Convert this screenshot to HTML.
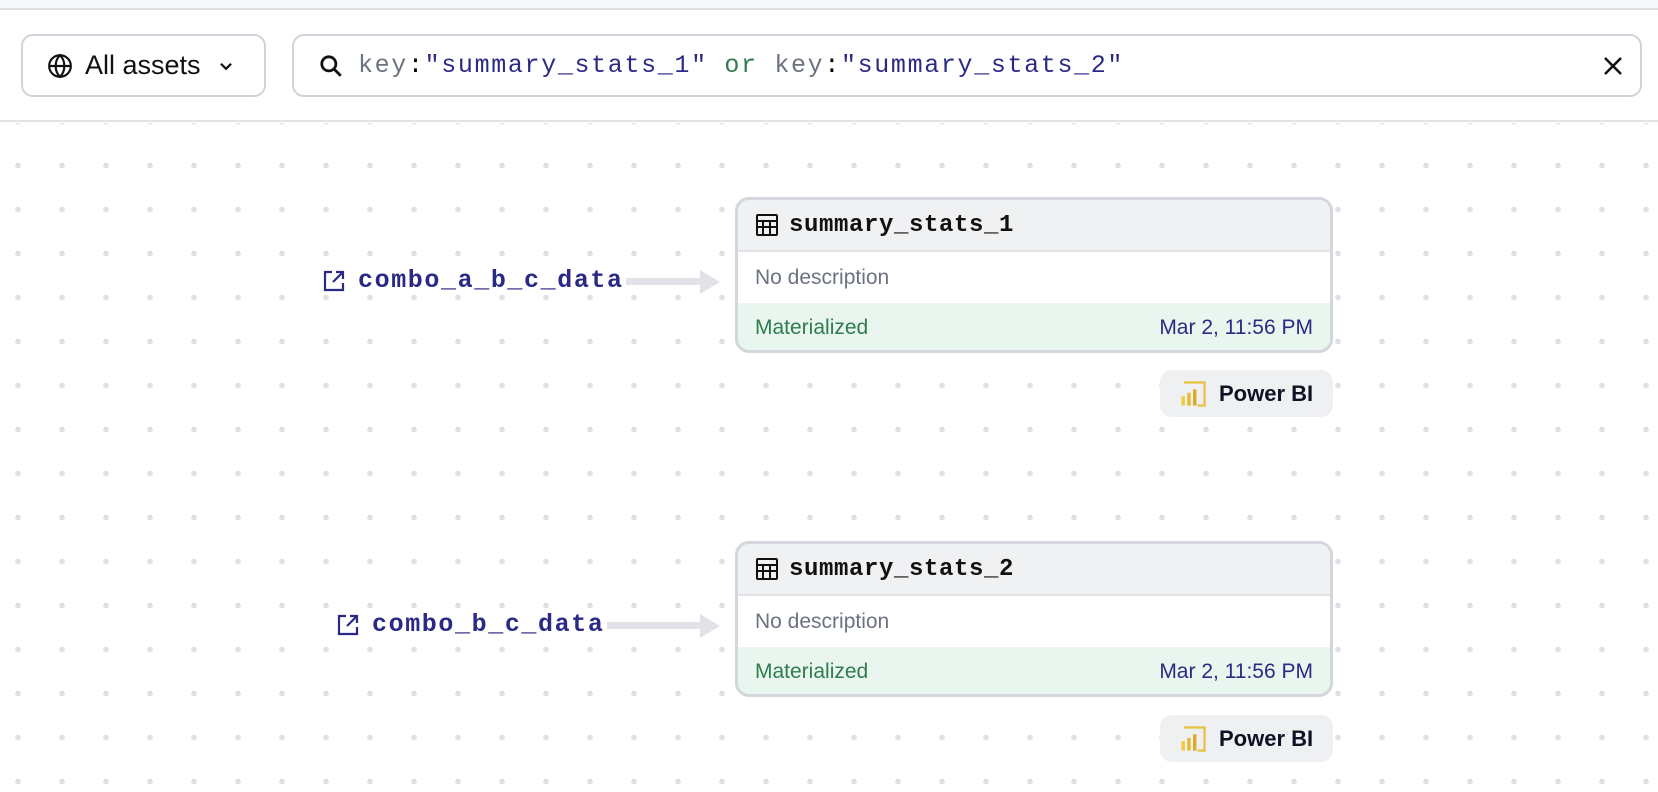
<!DOCTYPE html>
<html><head><meta charset="utf-8"><style>
*{box-sizing:border-box;margin:0;padding:0}
body{width:1658px;height:792px;overflow:hidden;background:#fff;font-family:"Liberation Sans",sans-serif;position:relative}
.top{position:absolute;left:0;top:0;width:1658px;height:122px;background:#fff;border-bottom:2px solid #e1e3e8}
.top:before{content:"";position:absolute;left:0;top:0;width:100%;height:8px;background:#f7f8f9;border-bottom:2px solid #dcdfe4}
.canvas{position:absolute;left:0;top:123px;width:1658px;height:669px;background-image:radial-gradient(circle,#dfe0e6 2.6px,transparent 3px);background-size:44px 44px;background-position:-4px -23.5px}
.btn{position:absolute;left:21px;top:34px;width:245px;height:63px;border:2px solid #d0d3da;border-radius:12px;display:flex;align-items:center;padding-left:24px;font-size:27px;color:#111}
.search{position:absolute;left:292px;top:34px;width:1350px;height:63px;border:2px solid #d0d3da;border-radius:12px;display:flex;align-items:center;padding-left:24px}
.mono{font-family:"Liberation Mono",monospace}
.q{font-size:25px;letter-spacing:1.65px;margin-left:14px}
.g{color:#6b7280}.b{color:#2a2a86}.gr{color:#2f7d4d}
.card{position:absolute;left:735px;width:598px;height:156px;border:3px solid #d3d6dc;border-radius:14px;overflow:hidden;background:#fff}
.ch{height:52px;background:#f0f1f3;border-bottom:2px solid #e1e3e7;display:flex;align-items:center;padding-left:17px}
.ch span{font-family:"Liberation Mono",monospace;font-size:24px;letter-spacing:0.6px;color:#111;margin-left:10px;font-weight:bold}
.cd{height:51px;display:flex;align-items:center;padding-left:17px;font-size:21px;color:#6b7280}
.cf{height:50px;background:#e8f6ef;display:flex;align-items:center;justify-content:space-between;padding:0 17px;font-size:21px}
.pill{position:absolute;left:1160px;width:173px;height:47px;background:#eff0f2;border-radius:12px;display:flex;align-items:center;padding-left:19px;font-size:22px;font-weight:bold;color:#0f1222}
.pill svg{margin-right:12px}
.src{position:absolute;display:flex;align-items:center;color:#2a2a86;font-family:"Liberation Mono",monospace;font-size:25px;letter-spacing:1.6px;font-weight:bold}
.src svg{margin-right:12px}
.arrow{position:absolute;height:7px;background:#e1e3e8}
.head{position:absolute;width:0;height:0;border-top:12px solid transparent;border-bottom:12px solid transparent;border-left:20px solid #e1e3e8}
</style></head><body>
<div class="top">
<div class="btn"><svg width="26" height="26" viewBox="0 0 24 24" fill="none" stroke="#111" stroke-width="2"><circle cx="12" cy="12" r="10"/><path d="M2 12h20M12 2c3 3 4 6.5 4 10s-1 7-4 10c-3-3-4-6.5-4-10s1-7 4-10z"/></svg><span style="margin-left:12px">All assets</span><svg style="margin-left:16px" width="18" height="18" viewBox="0 0 16 16" fill="none" stroke="#111" stroke-width="2"><path d="M3.5 6l4.5 4.5 4.5-4.5"/></svg></div>
<div class="search"><svg width="26" height="26" viewBox="0 0 24 24" fill="none" stroke="#111" stroke-width="2.6"><circle cx="10" cy="10" r="6.5"/><path d="M15 15l6 6"/></svg><span class="mono q"><span class="g">key</span>:<span class="b">"summary_stats_1"</span> <span class="gr">or</span> <span class="g">key</span>:<span class="b">"summary_stats_2"</span></span>
<svg style="position:absolute;right:16px;top:19px" width="22" height="22" viewBox="0 0 22 22" stroke="#111" stroke-width="2.5"><path d="M3 3l16 16M19 3L3 19"/></svg></div>
</div>
<div class="canvas"></div>

<div class="src" style="left:322px;top:266px"><svg width="24" height="24" viewBox="0 0 24 24" fill="none" stroke="#2a2a86" stroke-width="2.2"><path d="M10 3H3v18h18v-7"/><path d="M14 3h7v7M21 3l-10 10"/></svg>combo_a_b_c_data</div>
<div class="arrow" style="left:626px;top:278px;width:80px"></div><div class="head" style="left:700px;top:270px"></div>
<div class="src" style="left:336px;top:610px"><svg width="24" height="24" viewBox="0 0 24 24" fill="none" stroke="#2a2a86" stroke-width="2.2"><path d="M10 3H3v18h18v-7"/><path d="M14 3h7v7M21 3l-10 10"/></svg>combo_b_c_data</div>
<div class="arrow" style="left:607px;top:622px;width:99px"></div><div class="head" style="left:700px;top:614px"></div>

<div class="card" style="top:197px"><div class="ch"><svg width="24" height="24" viewBox="0 0 24 24" fill="none" stroke="#111" stroke-width="2"><rect x="2" y="2" width="20" height="20" rx="1"/><path d="M2 8h20M2 14h20M8 8v14M15 8v14"/></svg><span>summary_stats_1</span></div><div class="cd">No description</div><div class="cf"><span class="gr">Materialized</span><span class="b">Mar 2, 11:56 PM</span></div></div>
<div class="pill" style="top:370px"><svg width="28" height="30" viewBox="0 0 24 26" fill="none"><path d="M4 3h18v20H16" stroke="#e8c34a" stroke-width="2"/><rect x="2" y="15" width="3" height="8" fill="#f0c93f"/><rect x="7" y="12" width="3" height="11" fill="#e8b935"/><rect x="12" y="9" width="3" height="14" fill="#deaa2c"/></svg>Power BI</div>

<div class="card" style="top:541px"><div class="ch"><svg width="24" height="24" viewBox="0 0 24 24" fill="none" stroke="#111" stroke-width="2"><rect x="2" y="2" width="20" height="20" rx="1"/><path d="M2 8h20M2 14h20M8 8v14M15 8v14"/></svg><span>summary_stats_2</span></div><div class="cd">No description</div><div class="cf"><span class="gr">Materialized</span><span class="b">Mar 2, 11:56 PM</span></div></div>
<div class="pill" style="top:715px"><svg width="28" height="30" viewBox="0 0 24 26" fill="none"><path d="M4 3h18v20H16" stroke="#e8c34a" stroke-width="2"/><rect x="2" y="15" width="3" height="8" fill="#f0c93f"/><rect x="7" y="12" width="3" height="11" fill="#e8b935"/><rect x="12" y="9" width="3" height="14" fill="#deaa2c"/></svg>Power BI</div>
</body></html>
